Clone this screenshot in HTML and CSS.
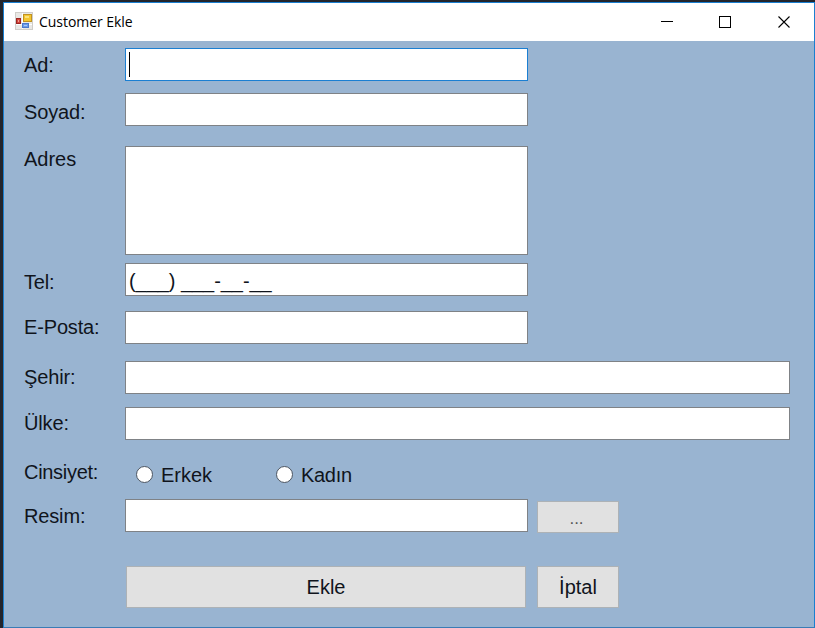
FILE: index.html
```html
<!DOCTYPE html>
<html lang="tr">
<head>
<meta charset="utf-8">
<title>Customer Ekle</title>
<link rel="stylesheet" href="styles.css">
</head>
<body>
<main class="window">
  <header class="titlebar">
    <svg class="app-icon" width="18" height="18" viewBox="0 0 18 18">
      <rect x="0.5" y="0.5" width="17" height="17" fill="#e9e8e5" stroke="#cfcdc9"/>
      <path d="M7.500 1v16M1 12.500h16" stroke="#fff"/>
      <rect x="8.500" y="2.500" width="8" height="7" fill="#f3c62f" stroke="#c09222"/>
      <path d="M10 4h4v2h-4z" fill="#fbe27c"/>
      <rect x="1.500" y="6.500" width="4" height="5" fill="#d2443c" stroke="#9c2420"/>
      <path d="M3 8h1v2h-1z" fill="#f0a090"/>
      <rect x="7.500" y="11.500" width="6" height="4" fill="#6b9bea" stroke="#4b79cc"/>
      <path d="M9 13h3v1h-3z" fill="#a9c8f8"/>
    </svg>
    <span class="title">Customer Ekle</span>
    <svg class="controls" width="132" height="14" viewBox="0 0 132 14" fill="none" stroke="#000">
      <path d="M1 6.500h12"/>
      <rect x="59.500" y="1.500" width="11" height="11"/>
      <path d="M118.500 1.500l11 11M129.500 1.500l-11 11" stroke-width="1.100"/>
    </svg>
  </header>
  <form class="form">
    <div class="row row-ad"><span class="label">Ad:</span><div class="field focused"><span class="caret"></span></div></div>
    <div class="row row-soyad"><span class="label">Soyad:</span><div class="field"></div></div>
    <div class="row row-adres"><span class="label">Adres</span><div class="field tall"></div></div>
    <div class="row row-tel"><span class="label">Tel:</span><div class="field">(___) ___-__-__</div></div>
    <div class="row row-posta"><span class="label">E-Posta:</span><div class="field"></div></div>
    <div class="row row-sehir"><span class="label">Şehir:</span><div class="field wide"></div></div>
    <div class="row row-ulke"><span class="label">Ülke:</span><div class="field wide"></div></div>
    <div class="row row-cinsiyet"><span class="label">Cinsiyet:</span>
      <div class="radios">
        <span class="option"><i class="dot"></i><span class="option-text">Erkek</span></span>
        <span class="option"><i class="dot"></i><span class="option-text">Kadın</span></span>
      </div>
    </div>
    <div class="row row-resim"><span class="label">Resim:</span><div class="field"></div><button type="button" class="button browse">...</button></div>
    <div class="actions"><button type="button" class="button save">Ekle</button><button type="button" class="button cancel">İptal</button></div>
  </form>
</main>
</body>
</html>
```

FILE: styles.css
```css
* {
  box-sizing: border-box;
}

body {
  margin: 0;
  height: 628px;
  padding: 2px 0 0 3px;
  background: #23252c;
  overflow: hidden;
}

.window {
  height: 626px;
  border: 1px solid #1a7fd0;
  border-bottom-color: #3a7cb5;
  background: #99b4d1;
  color: #10141c;
  font: 20px/24px "Liberation Sans", Arial, sans-serif;
}

.titlebar {
  display: flex;
  align-items: center;
  height: 38px;
  padding: 0 22px 0 11px;
  background: #fff;
}

.app-icon {
  margin-top: -2px;
}

.title {
  margin-left: 6px;
  font: 14px/20px "Open Sans", "Noto Sans", sans-serif;
  letter-spacing: -0.04px;
  color: #000;
}

.controls {
  margin-left: auto;
}

.form {
  padding: 7px 0 0 20px;
}

.row {
  display: flex;
  align-items: flex-start;
}

.label {
  width: 101px;
  flex: none;
  padding-top: 4px;
  letter-spacing: -0.15px;
}

.row-ad .label {
  padding-top: 5px;
}

.field {
  display: flex;
  width: 403px;
  height: 33px;
  padding: 5px 3px;
  border: 1px solid #7f8286;
  background: #fff;
  letter-spacing: -0.05px;
  white-space: pre;
}

.focused {
  border-color: #1b7fd2;
  padding-top: 3px;
}

.caret {
  width: 1px;
  height: 25px;
  background: #000;
}

.tall {
  height: 109px;
}

.wide {
  width: 665px;
}

.row-soyad {
  margin-top: 12px;
}

.row-adres {
  margin-top: 20px;
}

.row-tel {
  margin-top: 8px;
}

.row-posta {
  margin-top: 15px;
}

.row-sehir {
  margin-top: 17px;
}

.row-ulke {
  margin-top: 13px;
}

.row-soyad .label,
.row-tel .label {
  padding-top: 7px;
}

.row-adres .label {
  padding-top: 1px;
  letter-spacing: 0;
}

.row-cinsiyet {
  height: 38px;
  margin-top: 20px;
}

.row-cinsiyet .label {
  padding-top: 0;
  letter-spacing: -0.3px;
}

.radios {
  display: flex;
  padding: 3px 0 0 11px;
}

.option {
  display: flex;
  width: 140px;
}

.option + .option {
  letter-spacing: -0.3px;
}

.dot {
  width: 17px;
  height: 17px;
  margin: 3px 8px 0 0;
  border: 1px solid #4c5561;
  border-radius: 50%;
  background: #fff;
}

.row-resim {
  margin-top: 1px;
}

.row-resim .label {
  padding-top: 5px;
}

.button {
  padding: 0;
  border: 1px solid #adb2b6;
  background: #e1e1e1;
  color: #10141c;
  font: inherit;
}

.browse {
  width: 82px;
  height: 32px;
  margin: 2px 0 0 9px;
  padding: 4px 3px 0 0;
  color: #555;
  font-size: 17px;
}

.actions {
  display: flex;
  gap: 11px;
  margin: 33px 0 0 102px;
}

.save {
  width: 400px;
  height: 42px;
}

.cancel {
  width: 82px;
  height: 42px;
}
```
